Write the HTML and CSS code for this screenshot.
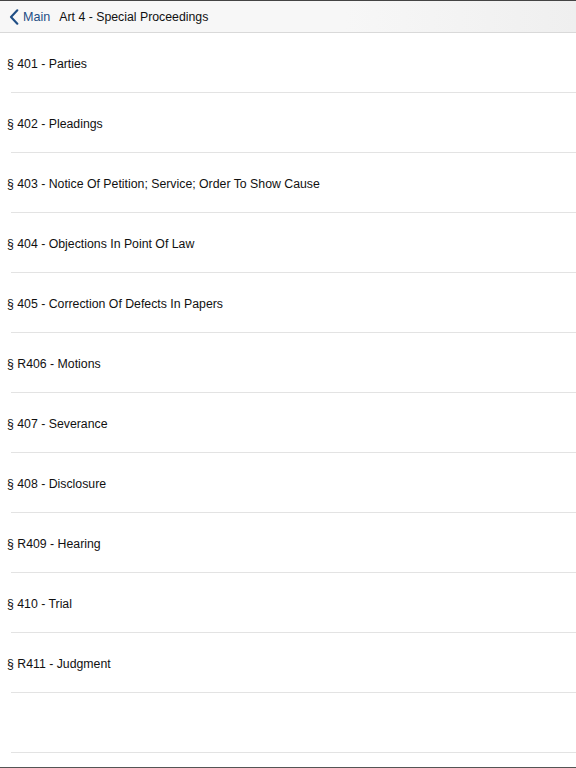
FILE: index.html
```html
<!DOCTYPE html>
<html lang="en">
<head>
  <meta charset="UTF-8" />
  <title>Art 4 - Special Proceedings</title>
  <link rel="stylesheet" href="styles.css">
</head>
<body>

  <div class="topbar">
    <a class="back" href="#">
      <svg width="10" height="16" viewBox="0 0 10 16">
        <path d="M8.3 1.3 L2 8 L8.3 14.7" fill="none" stroke="#1f4e85" stroke-width="2.1" stroke-linecap="round" stroke-linejoin="round"/>
      </svg>
      <span>Main</span>
    </a>
    <div class="title">Art 4 - Special Proceedings</div>
  </div>

  <ul class="sections">
    <li>§ 401 - Parties</li>
    <li>§ 402 - Pleadings</li>
    <li>§ 403 - Notice Of Petition; Service; Order To Show Cause</li>
    <li>§ 404 - Objections In Point Of Law</li>
    <li>§ 405 - Correction Of Defects In Papers</li>
    <li>§ R406 - Motions</li>
    <li>§ 407 - Severance</li>
    <li>§ 408 - Disclosure</li>
    <li>§ R409 - Hearing</li>
    <li>§ 410 - Trial</li>
    <li>§ R411 - Judgment</li>
    <li></li>
  </ul>

  <div class="bottombar"></div>

</body>
</html>
```

FILE: styles.css
```css
* {
  box-sizing: border-box;
}

html, body {
  margin: 0;
  padding: 0;
  height: 100%;
}

body {
  font-family: "Liberation Sans", Arial, sans-serif;
  background: #fff;
  color: #111;
  border-top: 1px solid #444;
  display: flex;
  flex-direction: column;
}

.topbar {
  height: 32px;
  background: linear-gradient(to right, #f7f7f7 60%, #efefef);
  border-bottom: 1px solid #d9d9d9;
  display: flex;
  align-items: center;
  padding-left: 9px;
  padding-top: 1px;
  flex-shrink: 0;
}

.back {
  display: flex;
  align-items: center;
  gap: 4px;
  color: #1f4e85;
  text-decoration: none;
  font-size: 12.6px;
  margin-right: 9px;
}

.title {
  font-size: 12.3px;
  color: #111;
}

.sections {
  list-style: none;
  margin: 0;
  padding: 0;
  flex: 1;
}

.sections li {
  height: 60px;
  display: flex;
  align-items: center;
  padding-left: 7px;
  padding-top: 2px;
  font-size: 12.3px;
  position: relative;
}

.sections li::after {
  content: "";
  position: absolute;
  left: 11px;
  right: 0;
  bottom: 0;
  height: 1px;
  background: #e3e3e3;
}

.bottombar {
  height: 1px;
  background: #555;
  flex-shrink: 0;
}
```
